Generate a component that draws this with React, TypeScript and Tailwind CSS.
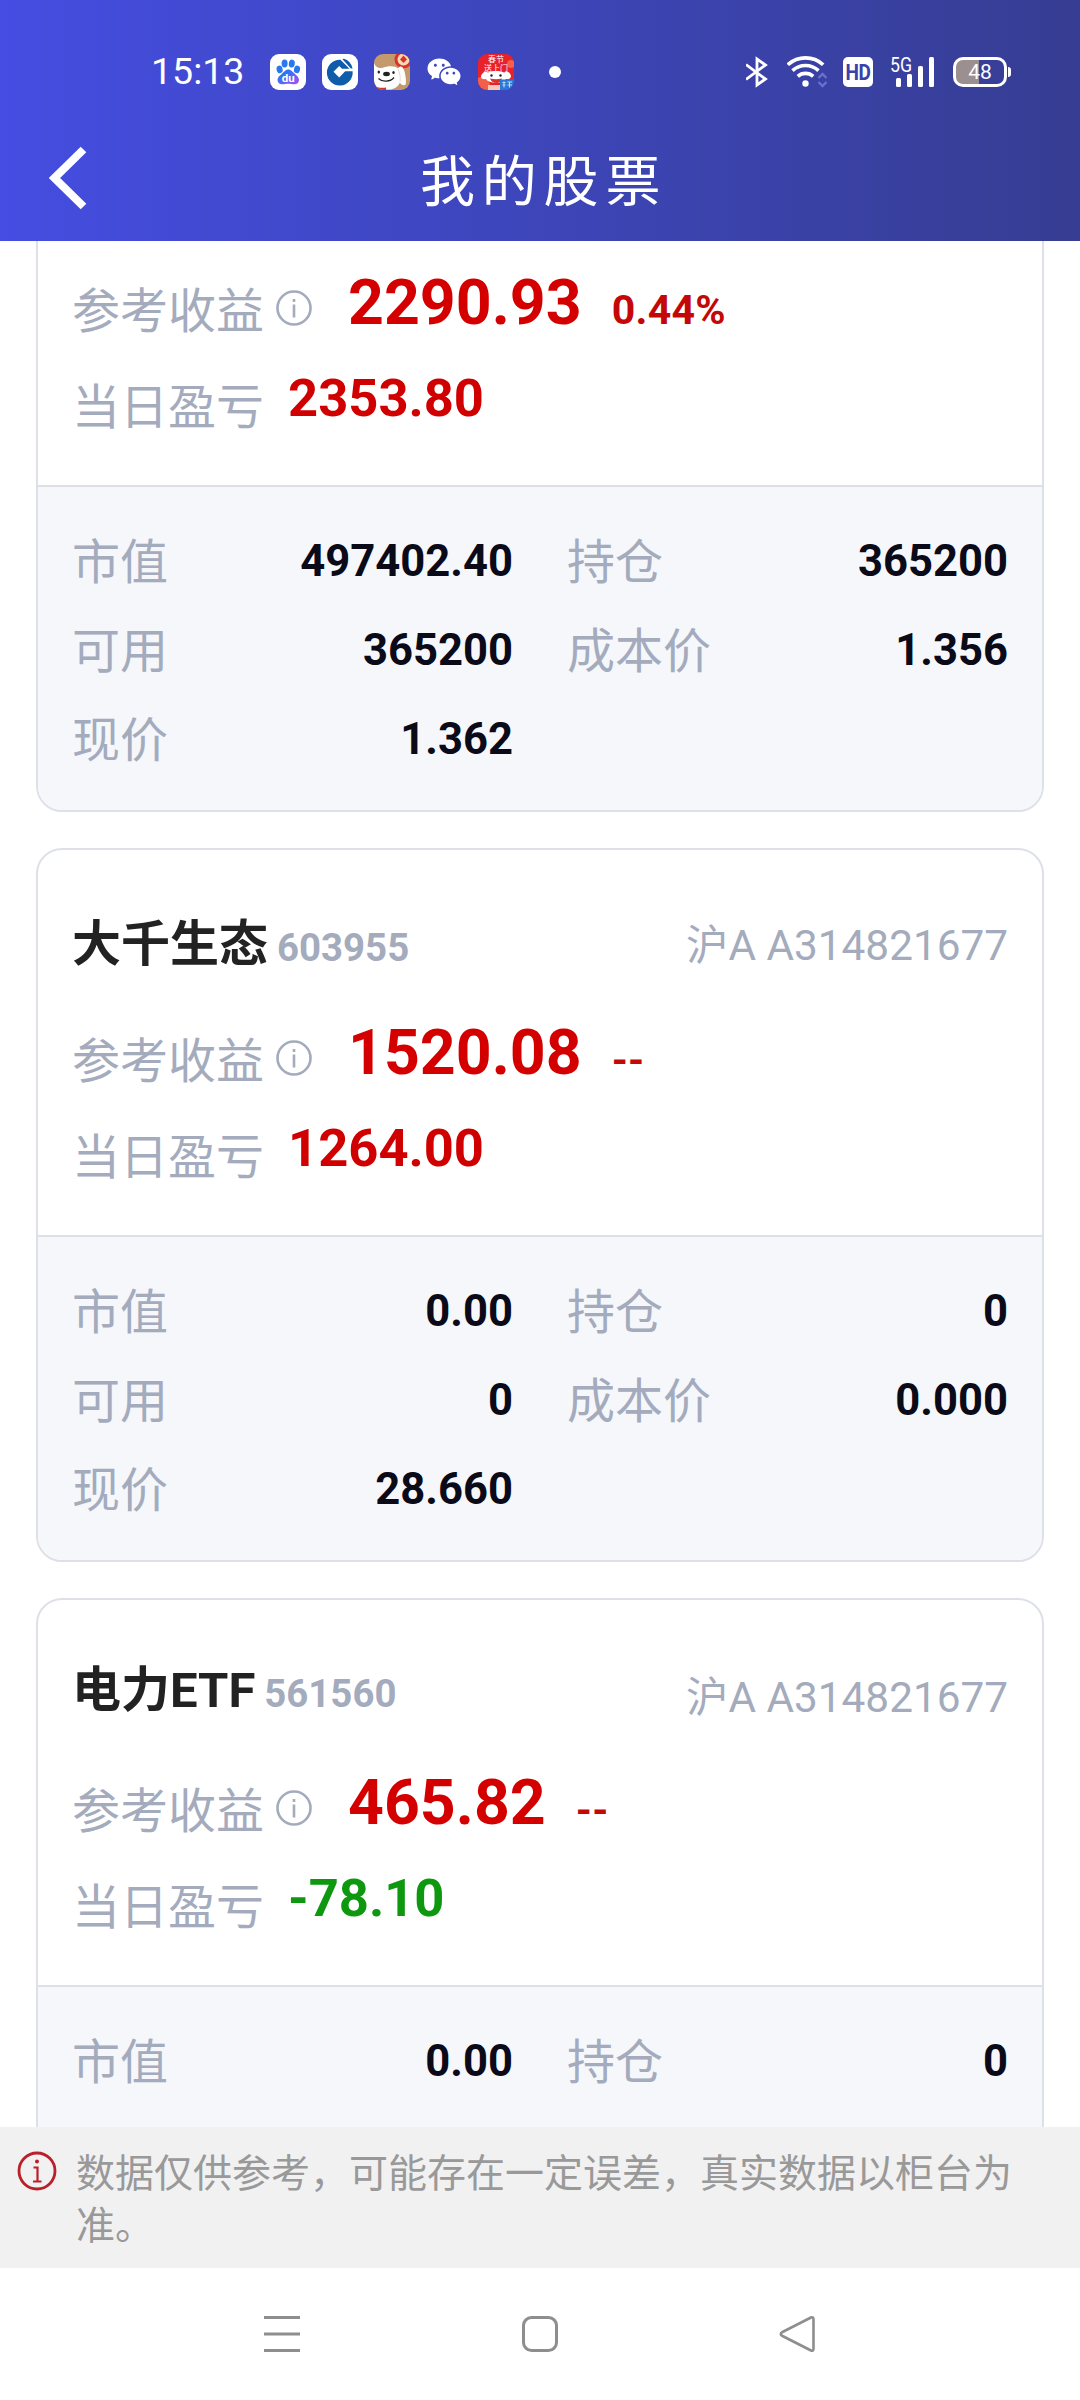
import { RiWechatFill } from "react-icons/ri";

type Stock = {
  name?: string;
  code?: string;
  account?: string;
  profit: string;
  rate: string;
  today: string;
  cells: string[][];
};

const stocks: Stock[] = [
  {
    profit: "2290.93",
    rate: "0.44%",
    today: "2353.80",
    cells: [
      ["市值", "497402.40"],
      ["持仓", "365200"],
      ["可用", "365200"],
      ["成本价", "1.356"],
      ["现价", "1.362"],
    ],
  },
  {
    name: "大千生态",
    code: "603955",
    account: "沪A A314821677",
    profit: "1520.08",
    rate: "--",
    today: "1264.00",
    cells: [
      ["市值", "0.00"],
      ["持仓", "0"],
      ["可用", "0"],
      ["成本价", "0.000"],
      ["现价", "28.660"],
    ],
  },
  {
    name: "电力ETF",
    code: "561560",
    account: "沪A A314821677",
    profit: "465.82",
    rate: "--",
    today: "-78.10",
    cells: [
      ["市值", "0.00"],
      ["持仓", "0"],
    ],
  },
];

function BaiduIcon() {
  return (
    <svg width="36" height="36" viewBox="0 0 36 36">
      <rect width="36" height="36" rx="9" fill="#fff" />
      <g fill="#2a78f0">
        <ellipse cx="9.6" cy="15.4" rx="3" ry="3.8" transform="rotate(-14 9.6 15.4)" />
        <ellipse cx="14.6" cy="9.6" rx="3" ry="4" />
        <ellipse cx="21.8" cy="9.6" rx="3" ry="4" transform="rotate(8 21.8 9.6)" />
        <ellipse cx="27" cy="15.4" rx="3" ry="3.8" transform="rotate(14 27 15.4)" />
      </g>
      <path
        d="M18.3 15.4c3 0 4.300 2.500 6.400 4.300 2.200 2 4.300 3.600 4.300 6.200 0 2.700-2 4.300-4.600 4.300-2.300 0-3.900-.5-6.100-.5s-3.800.5-6.100.5c-2.600 0-4.700-1.600-4.700-4.300 0-2.600 2.200-4.200 4.400-6.200 2.100-1.800 3.400-4.300 6.400-4.300z"
        fill="url(#paw)"
      />
      <text x="18.300" y="28.200" textAnchor="middle" fontSize="11.500" fontWeight="700" fontFamily="Roboto, sans-serif" fill="#fff">
        du
      </text>
      <defs>
        <linearGradient id="paw" x1="0" y1="0" x2="1" y2="1">
          <stop offset="0.3" stopColor="#2a78f0" />
          <stop offset="1" stopColor="#b04af0" />
        </linearGradient>
      </defs>
    </svg>
  );
}

function BankIcon() {
  return (
    <svg width="36" height="36" viewBox="0 0 36 36">
      <rect width="36" height="36" rx="9" fill="#fff" />
      <path
        d="M18.500 5.700A12.900 12.900 0 1 0 30.600 17.200h-7.400L17.200 23.400l-5.700-5.700 5.700-5.700 2.800 2.700h7.500z"
        fill="#0f5cab"
      />
      <path d="M20.300 5l1.800-.3a13 13 0 0 1 8.500 9.700h-1.800z" fill="#0f5cab" />
    </svg>
  );
}

function DogIcon() {
  return (
    <svg width="36" height="36" viewBox="0 0 36 36">
      <defs>
        <clipPath id="dogClip">
          <rect width="36" height="36" rx="9" />
        </clipPath>
      </defs>
      <g clipPath="url(#dogClip)">
        <rect width="36" height="36" fill="#c49a6c" />
        <circle cx="29.500" cy="5.500" r="9" fill="#d8342a" />
        <circle cx="29.500" cy="5.500" r="6" fill="#fbd9b4" />
        <path d="M29.500 1.500l3.500 4-3.500 3.500-3.500-3.500z" fill="#d8342a" />
        <path
          d="M0 9c1.500 4 4 5.500 8 5 6-2.500 13-2.500 16 .5 2.500-3.500 5-2 6.500 3 1 4.500 2 9 1.200 13-2 1.500-4.700.5-5.700-2-2 4-5 6-9 7H6C3 34 1 31 0 27z"
          fill="#fff"
        />
        <path d="M24 15c2 4 2.500 8 2 13" stroke="#e3d5c8" strokeWidth="0.900" fill="none" />
        <ellipse cx="12.500" cy="20" rx="3.400" ry="2.200" fill="#222" />
        <ellipse cx="4.800" cy="18" rx="1.200" ry="1.600" fill="#222" />
        <ellipse cx="19.500" cy="18.500" rx="1.200" ry="1.600" fill="#222" />
        <path d="M4.500 24.500c4 4 12 3.500 15.500-1" stroke="#222" strokeWidth="1.300" fill="none" />
        <path d="M3 33c3 1 6 1 9 .5v3H4z" fill="#d8342a" />
      </g>
    </svg>
  );
}

function FestivalIcon() {
  return (
    <svg width="36" height="36" viewBox="0 0 36 36">
      <defs>
        <clipPath id="festClip">
          <rect width="36" height="36" rx="9" />
        </clipPath>
      </defs>
      <g clipPath="url(#festClip)">
        <rect width="36" height="36" fill="#e8222a" />
        <circle cx="4" cy="31" r="8" fill="#f2604a" />
        <circle cx="33" cy="10" r="4" fill="#f2604a" />
        <g fontSize="8" fontFamily="'Noto Sans CJK SC', sans-serif" fill="#fff" textAnchor="middle">
          <text x="18" y="8">春节</text>
          <text x="18" y="16.500">送上门</text>
        </g>
        <path d="M3 22c2-4 4-5 7-3.500 5-2 11-2 16 0 3-1.500 6-.5 7 3.500 0 3-3 3.500-5 3-3 5-17 5-20 0-3 .5-5 0-5-3z" fill="#fff" />
        <path d="M12 24.500c4 1 8 1 12 0-1 6-10 6-12 0z" fill="#d8342a" />
        <circle cx="13.500" cy="21.500" r="1.200" fill="#222" />
        <circle cx="22.500" cy="21.500" r="1.200" fill="#222" />
        <path d="M10 31h13v5H10z" fill="#f9c9b8" />
        <rect x="22" y="25.500" width="14" height="11" fill="#2a78d8" />
        <path d="M24.500 28.500h3M24.500 31h3M26 27.500v6M29.500 28h4.500M29.500 31h4.500M31.500 28v5.500" stroke="#cfe4fb" strokeWidth="0.900" />
      </g>
    </svg>
  );
}

function StatusBar() {
  return (
    <div className="flex h-[144px] items-center pl-[151px] pr-[69px] text-white">
      <span className="w-[119px] text-[37.500px] leading-none">15:13</span>
      <div className="flex items-center gap-4">
        <BaiduIcon />
        <BankIcon />
        <DogIcon />
        <RiWechatFill className="h-9 w-9" />
        <FestivalIcon />
      </div>
      <span className="ml-[35px] h-3 w-3 rounded-full bg-white" />
      <div className="ml-auto flex items-center">
        <svg width="24" height="32" viewBox="0 0 24 32" fill="none" stroke="#fff" strokeWidth="2.800">
          <path d="M0 8.500l19.500 14.500L11 29V3l8.500 6L0 23.500" />
        </svg>
        <svg className="ml-[17px]" width="42" height="32" viewBox="0 0 42 32" fill="none" stroke="#fff" strokeWidth="3.600">
          <path d="M.8 8.800a26 26 0 0 1 35.400 0M5.500 14.600a19 19 0 0 1 26 0M10.800 20.300a11.500 11.500 0 0 1 15.400 0" />
          <circle cx="18.500" cy="27.500" r="3.200" fill="#fff" stroke="none" />
          <path d="M31.500 22l4-4 4 4M31.500 26l4 4 4-4" stroke="#6a70cc" strokeWidth="2.400" />
        </svg>
        <span className="ml-[14px] flex h-[30px] w-[30px] items-center justify-center rounded-[5px] bg-white text-[19px] font-bold leading-none tracking-[-0.5px] text-[#3a41a8]">
          <span className="scale-y-120">HD</span>
        </span>
        <svg className="ml-[17px] overflow-visible" width="46" height="32" viewBox="0 0 46 32" fill="#fff">
          <text x="0" y="15.500" fontSize="19.500" fontFamily="Roboto, sans-serif" textLength="22" lengthAdjust="spacingAndGlyphs">
            5G
          </text>
          <rect x="6" y="22" width="5" height="9" rx="1.500" />
          <rect x="17" y="18" width="5" height="13" rx="1.500" />
          <rect x="28" y="10" width="5" height="21" rx="1.500" />
          <rect x="39" y="1" width="5" height="30" rx="1.500" />
        </svg>
        <span className="ml-[17px] flex h-[30px] w-[54px] items-center justify-center rounded-[10px] border-3 border-white bg-linear-to-r from-[#9b8f90] from-48% to-transparent to-48% text-[21px] leading-none">
          48
        </span>
        <span className="ml-px h-[10px] w-[3px] rounded-r bg-white" />
      </div>
    </div>
  );
}

function TitleBar() {
  return (
    <div className="flex h-[97px] items-start">
      <svg className="ml-[49px] mt-[2px]" width="40" height="64" viewBox="0 0 40 64" fill="none" stroke="#fff" strokeWidth="8">
        <path d="M34.500 3.500L5.500 32 34.500 60.500" />
      </svg>
      <h1 className="ml-[331px] mt-2 text-[55px] leading-[60px] tracking-[6.800px] text-white">我的股票</h1>
    </div>
  );
}

function InfoIcon() {
  return (
    <svg width="36" height="36" viewBox="0 0 36 36" fill="none" stroke="#a3abbd" strokeWidth="2.600">
      <circle cx="18" cy="18" r="16.500" />
      <path d="M18 9v3M18 14.500v13" />
    </svg>
  );
}

function Cell({ label, value }: { label: string; value: string }) {
  return (
    <div className="flex h-12 justify-between leading-[48px]">
      <span className="pt-[2px] text-[48px] text-[#a3abbd]">{label}</span>
      <span className="pt-px text-[43.600px] font-bold text-[#0a0a18]">{value}</span>
    </div>
  );
}

function StockCard({ stock }: { stock: Stock }) {
  const down = stock.today.startsWith("-");
  const latin = /[A-Z]/.test(stock.name ?? "");
  return (
    <section className="h-[714px] shrink-0 overflow-hidden rounded-[26px] border-2 border-[#dde1e7] bg-white">
      <div className="h-[387px] border-b-2 border-[#dde1e7] px-[34px] pt-[71px]">
        <div className="flex h-12 justify-between leading-[48px]">
          {stock.name && (
            <>
              <div className={latin ? "-mt-[4px] flex items-baseline" : "flex items-baseline"}>
                <span className="text-[49px] font-bold text-[#222]">{stock.name}</span>
                <span className="ml-[9px] text-[38.400px] font-bold text-[#a3abbd]">{stock.code}</span>
              </div>
              <span className={latin ? "pt-[3px] text-[42.300px] text-[#a3abbd]" : "pt-px text-[42.300px] text-[#a3abbd]"}>
                {stock.account}
              </span>
            </>
          )}
        </div>
        <div className="mt-[52px] flex h-16 leading-[64px]">
          <span className="pt-[9px] text-[48px] text-[#a3abbd]">参考收益</span>
          <span className="ml-3 pt-[19px]">
            <InfoIcon />
          </span>
          <div className="ml-9 flex items-baseline font-bold">
            <span className="text-[62.600px] text-[#d40000]">{stock.profit}</span>
            <span className="ml-[30px] text-[41px] tracking-[0.3px] text-[#c40808]">{stock.rate}</span>
          </div>
        </div>
        <div className="mt-[35px] flex h-14 leading-[56px]">
          <span className="pt-[10px] text-[48px] text-[#a3abbd]">当日盈亏</span>
          <span className={down ? "ml-6 text-[52.500px] font-bold text-[#0d9810]" : "ml-6 text-[52.500px] font-bold text-[#d00000]"}>
            {stock.today}
          </span>
        </div>
      </div>
      <div className="grid h-[323px] grid-cols-2 content-start gap-x-[54px] gap-y-[41px] bg-[#f5f7fb] px-[34px] pt-[50px]">
        {stock.cells.map(([label, value]) => (
          <Cell key={label} label={label} value={value} />
        ))}
      </div>
    </section>
  );
}

function Notice() {
  return (
    <div className="flex h-[141px] bg-[#f1f1f1] pl-[17px] pt-[21px] text-[39px] leading-[52px] text-[#999]">
      <svg className="mt-[3px] shrink-0" width="40" height="40" viewBox="0 0 40 40" fill="none" stroke="#b8202a">
        <circle cx="20" cy="20" r="18" strokeWidth="2.800" />
        <path d="M16.500 16.500h4v14M16 30.500h8.500" strokeWidth="2.200" />
        <circle cx="20" cy="10.500" r="2" fill="#b8202a" stroke="none" />
      </svg>
      <p className="ml-[19px] w-[940px]">数据仅供参考，可能存在一定误差，真实数据以柜台为准。</p>
    </div>
  );
}

function NavBar() {
  return (
    <div className="flex h-[132px] items-start justify-between bg-white px-[262px] pt-[46px]">
      <svg width="40" height="40" viewBox="0 0 40 40" stroke="#8e8e8e" strokeWidth="3">
        <path d="M2 3.500h36M2 20h36M2 36.500h36" />
      </svg>
      <svg width="40" height="40" viewBox="0 0 40 40" fill="none" stroke="#8e8e8e" strokeWidth="3">
        <rect x="3.500" y="3.500" width="33" height="33" rx="8" />
      </svg>
      <svg width="40" height="40" viewBox="0 0 40 40" fill="none" stroke="#8e8e8e" strokeWidth="2.600" strokeLinejoin="round">
        <path d="M33 3.500L4.500 18q-3.500 2 0 4L33 36.500q2.500 1 2.500-2v-29q0-3-2.500-2z" />
      </svg>
    </div>
  );
}

export default function App() {
  return (
    <div className="flex h-[2400px] w-[1080px] flex-col overflow-hidden bg-white font-['Roboto','Noto_Sans_CJK_SC',sans-serif]">
      <header className="h-[241px] shrink-0 bg-linear-to-r from-[#454de2] to-[#363d92]">
        <StatusBar />
        <TitleBar />
      </header>
      <main className="min-h-0 flex-1 overflow-hidden px-9">
        <div className="-mt-[143px] flex flex-col gap-9">
          {stocks.map((stock) => (
            <StockCard key={stock.profit} stock={stock} />
          ))}
        </div>
      </main>
      <footer className="shrink-0">
        <Notice />
        <NavBar />
      </footer>
    </div>
  );
}
